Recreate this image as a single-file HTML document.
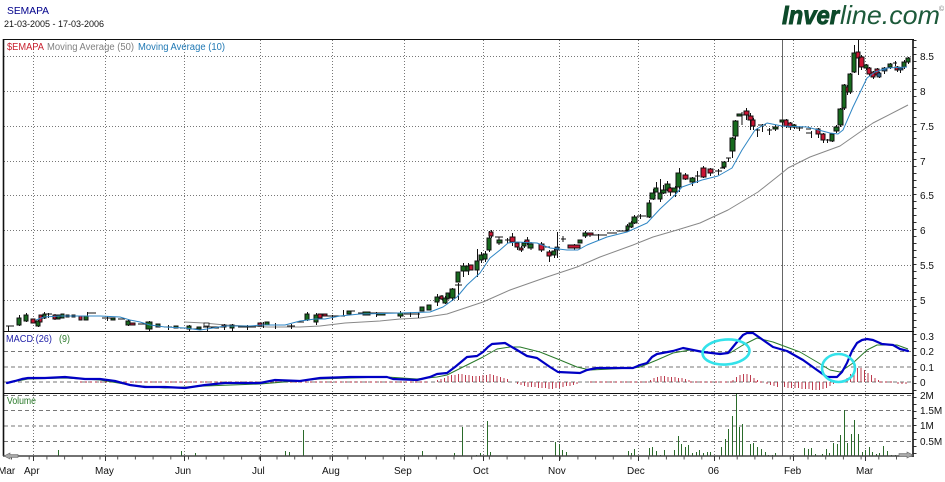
<!DOCTYPE html>
<html><head><meta charset="utf-8"><title>SEMAPA</title>
<style>html,body{margin:0;padding:0;background:#fff;width:945px;height:482px;overflow:hidden}svg{display:block}text{font-family:"Liberation Sans",Arial,sans-serif;font-size:10px;fill:#111}</style>
</head><body>
<svg width="945" height="482" viewBox="0 0 945 482" xmlns="http://www.w3.org/2000/svg">
<rect width="945" height="482" fill="#fff"/>
<!-- header -->
<text x="7" y="14" style="fill:#00008b" textLength="42" lengthAdjust="spacingAndGlyphs">SEMAPA</text>
<text x="4" y="27" style="fill:#111;font-size:9.4px" textLength="100" lengthAdjust="spacingAndGlyphs">21-03-2005 - 17-03-2006</text>
<text x="782" y="24" style="fill:#0d4a2a;font-size:26px;font-weight:bold;font-style:italic;stroke:#0d4a2a;stroke-width:.9" textLength="57" lengthAdjust="spacingAndGlyphs">Inver</text>
<text x="840" y="24" style="fill:#1d5a3a;font-size:26px;font-style:italic" textLength="100" lengthAdjust="spacingAndGlyphs">line.com</text>
<text x="939" y="11" style="fill:#777;font-size:7px">©</text>
<!-- grid -->
<g fill="none" stroke="#777" stroke-width="1">
<path stroke-dasharray="1 2" d="M33.5 40V456M105.5 40V456M184.5 40V456M260.5 40V456M332.5 40V456M404.5 40V456M483.5 40V456M559.5 40V456M638.5 40V456M714.5 40V456M793.5 40V456M865.5 40V456"/>
<path stroke-dasharray="1 2" d="M4 56.5H913M4 91.5H913M4 126.5H913M4 161.5H913M4 195.5H913M4 230.5H913M4 265.5H913M4 300.5H913"/>
<path stroke-dasharray="4 3" d="M4 351.5H913M4 367H913M4 382H913M4 395.5H913M4 410.5H913M4 426H913M4 441.5H913"/>
</g>
<path d="M782.5 39V456" stroke="#666" stroke-width="1"/>
<!-- MA50 -->
<polyline fill="none" stroke="#888" stroke-width="1" stroke-linejoin="round" points="184,322 204,323 225,325 248,326 268,327 300,327 320,326 345,323 380,321 400,319 420,318 447,314 483,302 510,290 547,277 577,267 600,257 633,245 653,237 677,230 700,223 728,210 758,192 782,173 788,168 810,157 840,146 860,132 873,123 908,105"/>
<!-- wicks -->
<path fill="none" stroke="#111" stroke-width="1" d="M8.5 326V331M6 326H14M19.5 315V326M26.5 313V322M38.5 320V327M44.5 312V319M46 314H52M48.5 313V318M88 313H96M87.5 312V317M55 314V320M102 318H113M107.5 316V321M118 319H125M128.5 319V326M138 324H146M149.5 321V331M164 327H172M168.5 325V330M180 328H186M189.5 325V331M193 329H197M203 327H222M207.5 326V331M211 328H219M224.5 324V330M232.5 324V331M238 327H256M247.5 325V330M263.5 322V328M270 325H285M275.5 323V329M287 326H295M291.5 324V329M296 322H304M307.5 312V321M316.5 313V325M325 316H345M332.5 315V320M347 311H355M343.5 310V316M358 313H397M376.5 312V317M400.5 311V318M404 314H420M418.5 312V318M410.5 312V317M437.5 294V306M442 295V300M445.5 296V304M452.5 288V301M455 285H462M458.5 283V300M463.5 263V277M468.5 263V275M477.5 249V277M481.5 252V263M485.5 251V262M489.5 231V252M491.5 230V238M495 237H503M499 237V245M505 240H511M507.5 238V243M512.5 233V246M517.5 242V250M521.5 246V252M524.5 241V248M527.5 237V245M531 242V250M541.5 242V252M545 247H550M549.5 250V262M554.5 248V258M557.5 232V258M561 239H566M563 236V242M568 245H580M574.5 244V250M585.5 231V238M590 233V237M593 235H607M598.5 234V240M607 233H617M617 231H627M627.5 224V232M631.5 221V228M634.5 215V224M637 216H646M640.5 214V219M649.5 200V218M653.5 189V200M656.5 182V192M660.5 179V202M663.5 185V194M667.5 181V191M670.5 187V196M675.5 186V197M679.5 168V192M685.5 173V180M692.5 177V186M695 176H700M697.5 171V183M703.5 166V178M710.5 168V176M715 171H722M718.5 169V175M720 168H725M724.5 161V169M726 158H731M728.5 158V162M732.5 137V158M735.5 120V140M739 115H745M742 112V125M746.5 108V120M750.5 113V130M753.5 118V130M755 130H760M757.5 128V137M758 125H766M762.5 124V132M767 130H772M769.5 128V135M775.5 125V131M780 121H785M782.5 120V128M786.5 119V128M790.5 122V130M794.5 124V129M796 128H803M799.5 127V131M806 129H811M812 133H806M811.5 131V138M818.5 128V138M823.5 133V143M826 140H830M827.5 139V143M832.5 133V142M836.5 125V133M840.5 108V127M844.5 84V110M847.5 85V95M850.5 73V94M854.5 45V73M858.5 39V75M861.5 55V70M866.5 64V70M869.5 67V76M873.5 71V79M877.5 68V77M879.5 72V78M884.5 67V74M890.5 63V69M893 63H897M895.5 61V66M897.5 66V72M900.5 67V73M904.5 60V69M908.5 57V64"/>
<!-- green bodies -->
<path fill="#176b1e" stroke="#111" stroke-width="1" d="M17 318h4v7h-4zM24 315h4v6h-4zM36 321h4v5h-4zM43 314h3v4h-3zM57 315h3v4h-3zM61 314h3v4h-3zM66 315h3v2h-3zM84 316h4v4h-4zM111 318h4v2h-4zM126 321h4v4h-4zM146 322h6v7h-6zM156 324h4v3h-4zM174 326h4v2h-4zM187 326h4v3h-4zM197 327h4v2h-4zM230 325h4v3h-4zM265 322h4v3h-4zM305 314h4v6h-4zM314 315h4v7h-4zM347 311h4v3h-4zM363 312h7v3h-7zM377 313h8v2h-8zM398 313h5v3h-5zM420 307h4v4h-4zM427 305h4v5h-4zM435 297h4v5h-4zM443 298h4v5h-4zM446 293h3v6h-3zM450 289h5v9h-5zM456 272h4v10h-4zM461 266h5v5h-5zM466 266h3v5h-3zM475 261h4v9h-4zM479 255h4v5h-4zM483 254h4v5h-4zM487 238h4v12h-4zM497 240h5v3h-5zM522 243h4v3h-4zM528 244h5v4h-5zM552 251h4v4h-4zM578 240h4v3h-4zM583 233h4v3h-4zM626 226h3v4h-3zM629 223h4v4h-4zM632 217h5v6h-5zM647 203h4v14h-4zM650 193h5v6h-5zM654 188h4v4h-4zM658 193h4v6h-4zM661 190h5v3h-5zM665 184h5v6h-5zM672 188h5v4h-5zM676 173h5v14h-5zM690 178h5v4h-5zM722 162h4v5h-4zM730 138h5v13h-5zM733 121h5v15h-5zM737 114h5v2h-5zM773 127h5v2h-5zM780 120h4v2h-4zM792 125h4v2h-4zM830 134h4v7h-4zM834 127h5v4h-5zM838 109h5v16h-5zM842 85h4v23h-4zM848 74h4v18h-4zM852 53h4v19h-4zM864 65h4v3h-4zM888 64h4v3h-4zM902 62h4v5h-4zM906 58h4v4h-4z"/>
<!-- red bodies -->
<path fill="#cc1433" stroke="#111" stroke-width="1" d="M31 319h4v4h-4zM39 315h3v7h-3zM53 315h3v4h-3zM72 315h3v2h-3zM79 316h3v4h-3zM130 323h5v2h-5zM222 325h4v2h-4zM258 323h4v3h-4zM318 314h4v4h-4zM323 314h4v2h-4zM440 296h3v3h-3zM469 265h4v5h-4zM489 232h4v4h-4zM510 237h5v5h-5zM515 243h4v4h-4zM519 248h4v2h-4zM525 240h4v3h-4zM539 244h5v6h-5zM547 252h4v4h-4zM568 245h12v3h-12zM587 233h6v2h-6zM668 188h4v4h-4zM683 175h5v4h-5zM701 168h5v9h-5zM708 169h5v4h-5zM744 111h5v4h-5zM748 116h5v4h-5zM751 120h4v6h-4zM784 120h4v6h-4zM788 123h4v4h-4zM816 129h4v5h-4zM821 134h4v6h-4zM846 87h2v5h-2zM856 52h4v6h-4zM859 57h5v10h-5zM867 68h4v6h-4zM871 72h4v5h-4zM875 69h4v6h-4zM895 67h4v3h-4z"/>
<!-- white/blue bodies -->
<path fill="#fff" stroke="#111" stroke-width=".8" d="M204 323h5v3h-5z"/>
<path fill="#2b5f8c" stroke="#111" stroke-width=".8" d="M555 247h4v3h-4zM877 73h4v4h-4zM882 68h5v3h-5zM898 68h5v2h-5z"/>
<!-- MA10 -->
<polyline fill="none" stroke="#2f86c4" stroke-width="1" stroke-linejoin="round" points="36,320 44,317 60,316 80,316 100,316 120,317 130,320 140,322 150,325 165,327 185,328 200,330 207,329 225,326 250,326 262,325 285,325 300,321 315,319 325,319 340,316 360,314 400,313 430,312 443,307 457,297 467,285 480,273 490,258 500,250 508,243 517,242 537,243 550,248 567,250 578,250 587,245 607,237 627,232 647,223 660,209 675,195 682,187 702,180 718,176 732,168 742,150 755,130 767,123 782,126 807,127 830,133 838,134 843,130 853,107 867,78 875,72 887,68 907,67"/>
<!-- histogram -->
<path fill="none" stroke="#b5283c" stroke-width="1" stroke-dasharray="2 3" d="M80 382H430M590 382H650M690 382H733M755 382H765M880 382H895"/>
<path fill="none" stroke="#b5283c" stroke-width=".9" d="M437.5 382v-2M441 382v-3M444.5 382v-4M448 382v-6M451.5 382v-7M455 382v-7M458.5 382v-8M462 382v-8M465.5 382v-7M469 382v-7M472.5 382v-6M476 382v-6M479.5 382v-6M483 382v-7M486.5 382v-7M490 382v-8M493.5 382v-7M497 382v-6M500.5 382v-5M504 382v-4M507.5 382v-3M517.5 382v2M521 382v3M524.5 382v4M528 382v5M531.5 382v5M535 382v5M538.5 382v6M542 382v6M545.5 382v6M549 382v7M552.5 382v7M556 382v6M559.5 382v6M563 382v5M566.5 382v4M570 382v4M573.5 382v3M577 382v2M650.5 382v-2M654 382v-4M657.5 382v-5M661 382v-6M664.5 382v-6M668 382v-5M671.5 382v-5M675 382v-5M678.5 382v-4M682 382v-4M685.5 382v-3M689 382v-2M733 382v-2M736.5 382v-5M740 382v-7M743.5 382v-8M747 382v-8M750.5 382v-7M754 382v-4M757.5 382v-2M767 382v2M770.5 382v3M774 382v4M777.5 382v5M784.5 382v5M788 382v6M791.5 382v6M795 382v6M798.5 382v6M802 382v7M805.5 382v7M809 382v7M812.5 382v8M816 382v8M819.5 382v8M823 382v7M826.5 382v6M830 382v4M833.5 382v2M847 382v-4M850.5 382v-8M854 382v-11M857.5 382v-14M861 382v-14M864.5 382v-12M868 382v-9M871.5 382v-7M875 382v-4M878.5 382v-2M898 382v2M902 382v2M906 382v2"/>
<!-- signal -->
<polyline fill="none" stroke="#2a7a2a" stroke-width="1" stroke-linejoin="round" points="7,383 28,379 65,378 100,380 130,385 165,388 205,386 260,384 320,379 350,378 387,377 417,379 437,377 447,375 467,365 483,357 497,349 510,347 520,347 540,352 560,360 577,367 590,370 633,368 640,367 657,360 673,353 690,350 713,353 730,353 743,345 757,338 773,342 800,352 817,362 830,370 840,372 853,363 867,350 877,345 897,345 908,349"/>
<!-- MACD -->
<polyline fill="none" stroke="#0000c4" stroke-width="2.2" stroke-linejoin="round" stroke-linecap="round" points="7,383 15,381 22,379 28,378 45,378 65,377 85,379 100,379 115,381 130,385 145,387 165,387 185,388 205,385 225,383 260,383 275,380 300,381 320,378 350,377 387,377 393,379 417,380 430,377 437,374 447,373 455,367 467,357 477,356 483,352 488,347 492,344 505,343 517,350 527,356 537,358 550,367 558,372 580,373 587,370 597,368 633,368 640,365 647,363 652,357 657,354 673,351 683,348 703,352 720,354 728,353 737,342 743,335 747,333 753,333 763,340 773,347 787,351 803,360 817,370 827,377 837,377 842,372 847,363 852,351 857,343 862,340 867,339 873,340 882,344 893,345 900,349 908,351"/>
<!-- cyan ellipses -->
<ellipse cx="726" cy="352" rx="23.5" ry="12.5" transform="rotate(-4 726 352)" fill="none" stroke="#33e2ea" stroke-width="2.6"/>
<ellipse cx="838.5" cy="368" rx="16.5" ry="14" fill="none" stroke="#33e2ea" stroke-width="2.6"/>
<!-- volume -->
<path fill="none" stroke="#2a6a2a" stroke-width="1" d="M58.5 456V450M181.5 456V451M195.5 456V453M285.5 456V451M289.5 456V452M303.5 456V430M422.5 456V451M454.5 456V453M462.5 456V427M476.5 456V455M480.5 456V453M487.5 456V421M490.5 456V452M555.5 456V442M559.5 456V444M562.5 456V450M566.5 456V452M628.5 456V451M631.5 456V453M634.5 456V449M649.5 456V448M652.5 456V447M656.5 456V451M660.5 456V455M664.5 456V450M674.5 456V450M678.5 456V436M681.5 456V444M685.5 456V447M688.5 456V445M692.5 456V453M696.5 456V452M699.5 456V450M703.5 456V453M707.5 456V452M710.5 456V452M721.5 456V447M725.5 456V439M728.5 456V429M732.5 456V416M736.5 456V394M739.5 456V427M742.5 456V424M750.5 456V444M753.5 456V443M757.5 456V447M761.5 456V449M765.5 456V452M768.5 456V455M772.5 456V455M775.5 456V453M804.5 456V448M808.5 456V449M811.5 456V448M815.5 456V454M822.5 456V454M826.5 456V449M829.5 456V453M833.5 456V443M837.5 456V444M840.5 456V435M844.5 456V410M847.5 456V443M851.5 456V434M854.5 456V420M858.5 456V434M862.5 456V452M865.5 456V450M869.5 456V447M872.5 456V452M876.5 456V454M879.5 456V453M883.5 456V446M887.5 456V451M891.5 456V455M895.5 456V455"/>
<!-- frame -->
<g fill="none" stroke="#111">
<path stroke-width="1" d="M3 39.5H914M3 331.5H914M3 393.5H914"/>
<path stroke-width="1.6" d="M3.5 39V456M913 39V457"/>
<path stroke="#444" stroke-width="1.5" d="M3 456H913"/>
<path stroke="#333" stroke-width="3" stroke-dasharray="1 6" d="M915 40V456"/>
<path stroke="#555" stroke-width="3" stroke-dasharray="1 16.7" stroke-dashoffset="-7" d="M4 458H913"/>
<path stroke="#333" stroke-width="1" d="M33.5 456V461M105.5 456V461M184.5 456V461M260.5 456V461M332.5 456V461M404.5 456V461M483.5 456V461M559.5 456V461M638.5 456V461M714.5 456V461M793.5 456V461M865.5 456V461"/>
</g>
<!-- scroll arrows -->
<path d="M4 456l6-3v1.5h8v3h-8v1.5z" fill="#a8a8a8" stroke="#666" stroke-width=".6"/>
<path d="M913 455l-6-3v1.5h-8v3h8v1.5z" fill="#a8a8a8" stroke="#666" stroke-width=".6"/>
<!-- legends -->
<text x="7" y="50" style="fill:#c8202e" textLength="37" lengthAdjust="spacingAndGlyphs">$EMAPA</text>
<text x="47" y="50" style="fill:#808080" textLength="87" lengthAdjust="spacingAndGlyphs">Moving Average (50)</text>
<text x="138" y="50" style="fill:#1f78b4" textLength="87" lengthAdjust="spacingAndGlyphs">Moving Average (10)</text>
<text x="6" y="342" style="fill:#2222aa" textLength="46" lengthAdjust="spacingAndGlyphs">MACD (26)</text>
<text x="59" y="342" style="fill:#2a7a2a" textLength="11" lengthAdjust="spacingAndGlyphs">(9)</text>
<text x="7" y="404" style="fill:#2a7a2a" textLength="29" lengthAdjust="spacingAndGlyphs">Volume</text>
<!-- right axis -->
<g>
<text x="920" y="60">8.5</text><text x="920" y="95">8</text><text x="920" y="130">7.5</text><text x="920" y="165">7</text><text x="920" y="199">6.5</text><text x="920" y="234">6</text><text x="920" y="269">5.5</text><text x="920" y="304">5</text>
<text x="920" y="340">0.3</text><text x="920" y="355">0.2</text><text x="920" y="371">0.1</text><text x="920" y="386">0</text>
<text x="920" y="399">2M</text><text x="920" y="414">1.5M</text><text x="920" y="429">1M</text><text x="920" y="445">0.5M</text>
</g>
<!-- x axis -->
<g>
<text x="-2" y="474">Mar</text><text x="24" y="474">Apr</text><text x="95" y="474">May</text><text x="175" y="474">Jun</text><text x="252" y="474">Jul</text><text x="322" y="474">Aug</text><text x="394" y="474">Sep</text><text x="473" y="474">Oct</text><text x="548" y="474">Nov</text><text x="627" y="474">Dec</text><text x="708" y="474">06</text><text x="784" y="474">Feb</text><text x="856" y="474">Mar</text>
</g>
</svg>
</body></html>
